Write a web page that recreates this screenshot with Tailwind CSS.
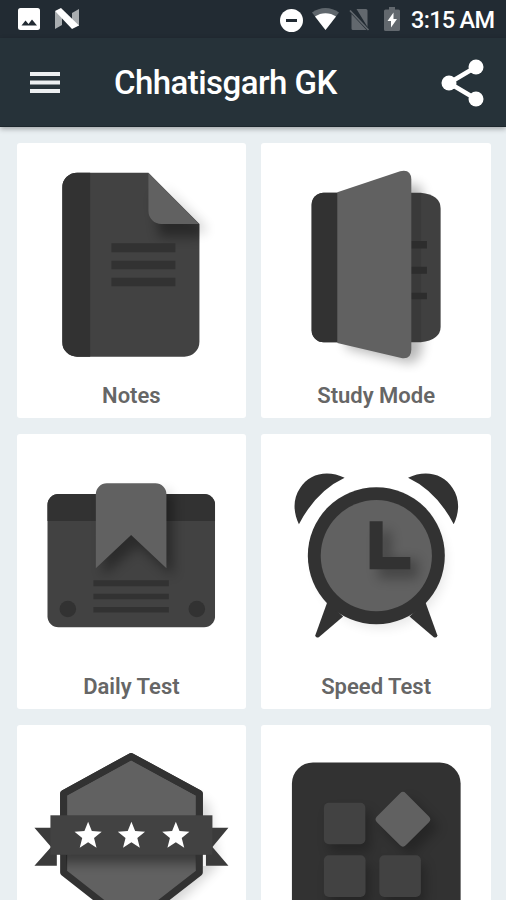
<!DOCTYPE html>
<html lang="en">

<head>
  <meta charset="UTF-8" />
  <title>Chhatisgarh GK</title>
  <meta name="viewport" content="width=device-width, initial-scale=1.0" />
  <script src="https://cdn.jsdelivr.net/npm/@tailwindcss/browser@4"></script>
</head>

<body class="bg-[#e9eff2] h-screen overflow-hidden flex flex-col font-['Roboto',sans-serif]">

  <!-- Status bar -->
  <div class="h-[38px] shrink-0 bg-[#222b33] flex items-center justify-between pl-[18px] pr-[11px] text-white">
    <div class="flex items-center gap-[14px]">
      <svg class="w-[22px] h-[22px]" viewBox="0 0 22 22">
        <rect width="22" height="22" rx="2.5" fill="#fff"/>
        <path d="M3.5 17.5l4-5 3 3.5 3.500-4.500 5 6z" fill="#222b33"/>
      </svg>
      <svg class="w-[26px] h-[22px]" viewBox="0 0 26 22">
        <path d="M1 3l7 5v9l-7 4zM25 1v17l-7-3V5z" fill="#a9adb0"/>
        <path d="M1 3l6-3 18 17.500-7 3.500z" fill="#fff"/>
      </svg>
    </div>
    <div class="flex items-center">
      <svg class="w-[23px] h-[23px] mt-[2px]" viewBox="0 0 23 23">
        <circle cx="11.500" cy="11.500" r="11.500" fill="#fff"/>
        <rect x="6" y="10" width="11" height="3" fill="#222b33"/>
      </svg>
      <svg class="w-[27px] h-[22px] ml-[9px]" viewBox="0 0 27 22">
        <path d="M0 4.500C8-1.500 19-1.500 27 4.500L13.500 22z" fill="#5f666c"/>
        <path d="M3 8.500C9 4 18 4 24 8.500L13.500 22z" fill="#fff"/>
      </svg>
      <svg class="w-[21px] h-[23px] ml-[10px]" viewBox="0 0 21 23">
        <path d="M7.500 1H17q1.500 0 1.500 1.500V19zM2.500 6v14.500q0 1.500 1.500 1.500h13.500z" fill="#62686e"/>
        <path d="M1 2.500l18.500 19.500" stroke="#62686e" stroke-width="1.700"/>
      </svg>
      <svg class="w-[16px] h-[24px] ml-[14px]" viewBox="0 0 16 24">
        <path d="M5 0h6v2.500h3.500q1.500 0 1.500 1.500v18.500q0 1.500-1.500 1.500h-13Q0 24 0 22.500V4q0-1.500 1.500-1.500H5z" fill="#62686e"/>
        <path d="M9.500 5.500L3.500 14h3.500v6.500l6-8.500H9.500z" fill="#fff"/>
      </svg>
      <span class="ml-[11px] w-[84px] text-[23.5px] leading-[38px] font-medium whitespace-nowrap tracking-[-0.7px] pt-[2px]">3:15 AM</span>
    </div>
  </div>

  <!-- App bar -->
  <header class="h-[89px] shrink-0 bg-[#263239] flex items-center pl-[29px] pr-[22px] text-white border-b border-[#1d272d] shadow-[0_2px_5px_rgba(0,0,0,0.3)]">
    <svg class="w-[32px] h-[24px]" viewBox="0 0 32 24">
      <path d="M1 4h30M1 12.500h30M1 21h30" stroke="#eceff1" stroke-width="4"/>
    </svg>
    <h1 class="ml-[53px] pt-[2px] text-[33px] font-medium whitespace-nowrap tracking-[-0.55px]">Chhatisgarh GK</h1>
    <svg class="w-[43px] h-[48px] ml-auto mt-[2px]" viewBox="0 0 43 48">
      <path d="M35 8L8 24l27 16" fill="none" stroke="#fff" stroke-width="4.500"/>
      <circle cx="35" cy="8" r="7.500" fill="#fff"/>
      <circle cx="8" cy="24" r="7.500" fill="#fff"/>
      <circle cx="35" cy="40" r="7.500" fill="#fff"/>
    </svg>
  </header>

  <!-- Menu cards -->
  <main class="grid grid-cols-2 gap-x-[15px] gap-y-4 pl-[16.5px] pr-[15px] pt-4 flex-1 min-h-0 overflow-hidden text-[22px] font-semibold text-[#666] text-center">

    <div class="h-[275px] bg-white rounded-[3px]">
      <svg class="w-full h-[230px]" viewBox="0 0 229.5 230">
        <defs>
          <filter id="soft" x="-50%" y="-50%" width="200%" height="200%"><feGaussianBlur stdDeviation="6"/></filter>
          <clipPath id="page"><path d="M60 29.700h71.300L182.300 81v117.700a15 15 0 0 1-15 15H60a15 15 0 0 1-15-15v-154a15 15 0 0 1 15-15z"/></clipPath>
        </defs>
        <path d="M145 42l44 42v6h-20z" fill="#000" opacity=".16" filter="url(#soft)"/>
        <g clip-path="url(#page)">
          <rect x="45" y="29" width="138" height="185" fill="#424242"/>
          <rect x="45" y="29" width="28" height="185" fill="#323232"/>
          <path d="M137 52l50 30v12h-45z" fill="#000" opacity=".38" filter="url(#soft)"/>
          <path d="M131.300 29.700L182.300 81h-38a13 13 0 0 1-13-13z" fill="#616161"/>
        </g>
        <path d="M94.300 100.300h64v9h-64zM94.300 117.700h64v8.600h-64zM94.300 134.700h64v8.600h-64z" fill="#323232"/>
      </svg>
      <p class="leading-[46px]">Notes</p>
    </div>

    <div class="h-[275px] bg-white rounded-[3px]">
      <svg class="w-full h-[230px]" viewBox="0 0 229.5 230">
        <path d="M85 62l60-20q16-3 16 8v150q0 20-14 20L85 205z" fill="#000" opacity=".28" filter="url(#soft)"/>
        <path d="M62.500 49.700h97q20 2 20 16v118q0 13-20 15.600h-97a12 12 0 0 1-12-12V61.700a12 12 0 0 1 12-12z" fill="#404040"/>
        <path d="M150 50h10v149h-10z" fill="#3a3a3a"/>
        <path d="M62.500 49.700h14v149.600h-14a12 12 0 0 1-12-12V61.700a12 12 0 0 1 12-12z" fill="#323232"/>
        <path d="M150 98h15.800v7.500H150zM150 123.700h15.800v7H150zM150 149.700h15.800v6.600H150z" fill="#2d2d2d"/>
        <path d="M76.200 49.300L139 28.200q11-2.500 11.200 8.300v170q0 10-10 8.500L76.200 200z" fill="#616161"/>
      </svg>
      <p class="leading-[46px]">Study Mode</p>
    </div>

    <div class="h-[275px] bg-white rounded-[3px]">
      <svg class="w-full h-[230px]" viewBox="0 0 229.5 230">
        <defs>
          <clipPath id="box"><rect x="30.300" y="60" width="167.700" height="133.300" rx="11"/></clipPath>
        </defs>
        <rect x="100" y="56" width="54" height="30" fill="#000" opacity=".12" filter="url(#soft)"/>
        <g clip-path="url(#box)">
          <rect x="30" y="60" width="168" height="134" fill="#424242"/>
          <rect x="30" y="60" width="168" height="27" fill="#323232"/>
          <path d="M86 58h70v84l-35-30-35 30z" fill="#000" opacity=".35" filter="url(#soft)"/>
        </g>
        <path d="M78.700 134.300V60.300a11 11 0 0 1 11-11h48.600a11 11 0 0 1 11 11v74L114 101z" fill="#616161"/>
        <path d="M76.300 146.300h75.400v6H76.300zM76.300 159.700h75.400v5.600H76.300zM76.300 173h75.400v5.500H76.300z" fill="#323232"/>
        <circle cx="50.700" cy="175" r="8.300" fill="#323232"/>
        <circle cx="179.700" cy="175" r="8.300" fill="#323232"/>
      </svg>
      <p class="leading-[46px]">Daily Test</p>
    </div>

    <div class="h-[275px] bg-white rounded-[3px]">
      <svg class="w-full h-[230px]" viewBox="0 0 229.5 230">
        <circle cx="120" cy="129" r="65" fill="#000" opacity=".09" filter="url(#soft)"/>
        <g fill="#323232">
          <path d="M83.500 43.700Q55 57 37.800 90.300C32 78 31.500 65 39 54 48 39 67 35.500 83.500 43.700z"/>
          <path d="M146.900 43.700Q175.400 57 192.600 90.300C198.400 78 198.900 65 191.400 54 182.400 39 163.400 35.500 146.900 43.700z"/>
          <path d="M66.200 168l-12 33.200q0 3 3.500 2L82 182.500z"/>
          <path d="M164.200 168l12 33.200q0 3-3.500 2L148.400 182.500z"/>
        </g>
        <circle cx="115.200" cy="121.700" r="68.500" fill="#323232"/>
        <circle cx="115.200" cy="121.700" r="55.600" fill="#616161"/>
        <path d="M117 97h13v28h27v20h-40z" fill="#000" opacity=".27" filter="url(#soft)"/>
        <path d="M108.500 87.300h13V123h27.700v12.300h-40.700z" fill="#323232"/>
      </svg>
      <p class="leading-[46px]">Speed Test</p>
    </div>

    <div class="h-[275px] bg-white rounded-[3px]">
      <svg class="w-full h-[230px]" viewBox="0 0 229.5 230">
        <defs>
          <clipPath id="hex"><path d="M114 35l65 36v74l-65 52-65-52V71z"/></clipPath>
          <path id="star" d="M0-14.200l3.700 9.300 9.900.6-7.700 6.300 2.500 9.700L0 6.300l-8.400 5.400 2.500-9.700-7.700-6.300 9.900-.6z" fill="#fff"/>
        </defs>
        <path d="M130 50l61 28 10 62-76 72z" fill="#000" opacity=".16" filter="url(#soft)"/>
        <path d="M17.300 102.700h22.400v38H17.300L34 122zM211.300 102.700h-22.600v38h22.600L195.300 122z" fill="#3b3b3b"/>
        <path d="M185.900 130h2.800v11h-2.800z" fill="#f4f4f4"/>
        <path d="M114 31.500L182.200 68.500v79L114 200.500 46.500 147.500v-79z" fill="#616161" stroke="#323232" stroke-width="7" stroke-linejoin="round"/>
        <g clip-path="url(#hex)">
          <rect x="40" y="100" width="155" height="38" fill="#000" opacity=".4" filter="url(#soft)"/>
          <path d="M49 60h130v30H49z" fill="#616161"/>
          <path d="M49 71l65-36 65 36z" fill="#616161"/>
        </g>
        <path d="M46.500 130V68.500L114 31.500l68.200 37V130" fill="none" stroke="#323232" stroke-width="7" stroke-linejoin="round"/>
        <rect x="33.300" y="90.300" width="162" height="39.500" fill="#424242"/>
        <use href="#star" x="71" y="111"/>
        <use href="#star" x="114.300" y="111"/>
        <use href="#star" x="158.700" y="111"/>
      </svg>
    </div>

    <div class="h-[275px] bg-white rounded-[3px]">
      <svg class="w-full h-[230px]" viewBox="0 0 229.5 230">
        <rect x="30.800" y="37.500" width="168.700" height="169" rx="21" fill="#323232"/>
        <g fill="#000" opacity=".25" filter="url(#soft)">
          <rect x="68" y="86" width="41" height="41"/>
          <rect x="68" y="139" width="41" height="41"/>
          <rect x="123" y="139" width="41" height="41"/>
          <path d="M149 73l29 29-29 29-29-29z"/>
        </g>
        <g fill="#424242">
          <rect x="62.800" y="77.700" width="41.400" height="41.600" rx="5"/>
          <rect x="62.800" y="130.300" width="41.600" height="41.600" rx="5"/>
          <rect x="118.200" y="130.300" width="41.600" height="41.600" rx="5"/>
        </g>
        <rect x="121.400" y="73.900" width="40.800" height="40.800" rx="4" transform="rotate(45 141.800 94.300)" fill="#616161"/>
      </svg>
    </div>

  </main>

</body>
</html>
